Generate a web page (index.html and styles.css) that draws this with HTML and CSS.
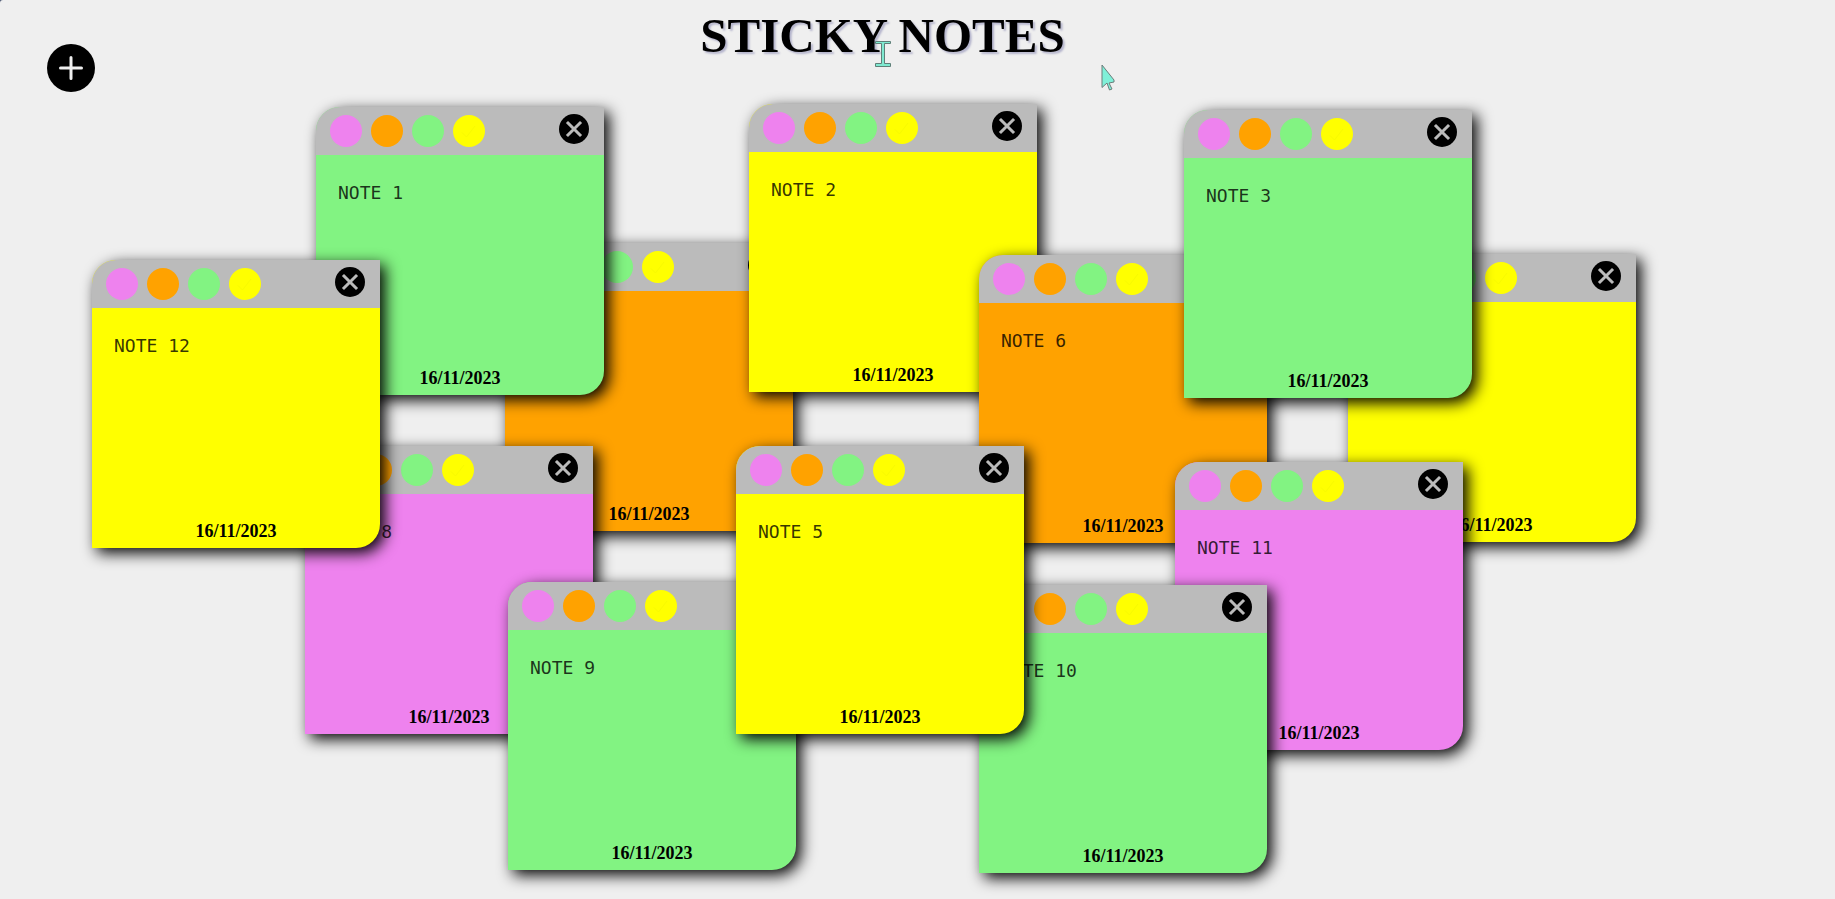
FILE: index.html
```html
<!DOCTYPE html>
<html lang="en">
<head>
<meta charset="utf-8">
<meta name="viewport" content="width=device-width, initial-scale=1">
<title>Sticky Notes</title>
<link rel="stylesheet" href="styles.css">
</head>
<body>
<svg class="sprite" aria-hidden="true">
  <symbol id="icon-plus" viewBox="0 0 48 48"><path d="M24 13.500v21M13.500 24h21" stroke="#efefef" stroke-width="3" stroke-linecap="round"/></symbol>
  <symbol id="icon-close" viewBox="0 0 30 30"><path d="M9 9l12 12M21 9l-12 12" stroke="#bbb" stroke-width="3" stroke-linecap="square"/></symbol>
  <symbol id="icon-check" viewBox="0 0 32 32"><path d="M9 17.500l4.500 4.500L22 11" fill="none" stroke="#f8fa00" stroke-width="1"/></symbol>
</svg>
<main class="board">
  <header class="header">
    <button class="add" type="button" aria-label="Add note"><svg><use href="#icon-plus"/></svg></button>
    <h1 class="title">STICKY NOTES</h1>
  </header>
  <section class="canvas" id="canvas" aria-label="Notes"></section>
  <svg class="cursor cursor-text" viewBox="0 0 18 28" aria-hidden="true"><path d="M1.500 1.500h15v2h-6v20h6v3h-15v-3h6v-20h-6z" fill="#7fe9d0" stroke="#5f7f78"/></svg>
  <svg class="cursor cursor-arrow" viewBox="0 0 14 28" aria-hidden="true"><path d="M1 1v22.500l5-4.500 2.500 7 2.500-1-3-6 5-1V16z" fill="#7ff0d8" stroke="#6c7c7a"/></svg>
</main>
<script src="notes.js"></script>
</body>
</html>
```
FILE: notes.js
```js
// Notes in stacking order, the last one on top.
const notes = [
  { id: 4, color: 'orange', x: 505, y: 243 },
  { id: 7, color: 'yellow', x: 1348, y: 254 },
  { id: 1, color: 'green', x: 316, y: 107 },
  { id: 2, color: 'yellow', x: 749, y: 104 },
  { id: 6, color: 'orange', x: 979, y: 255 },
  { id: 3, color: 'green', x: 1184, y: 110 },
  { id: 8, color: 'violet', x: 305, y: 446 },
  { id: 9, color: 'green', x: 508, y: 582 },
  { id: 11, color: 'violet', x: 1175, y: 462 },
  { id: 10, color: 'green', x: 979, y: 585 },
  { id: 5, color: 'yellow', x: 736, y: 446 },
  { id: 12, color: 'yellow', x: 92, y: 260 }
];
const swatches = ['violet', 'orange', 'green', 'yellow'];

document.getElementById('canvas').innerHTML = notes.map(n => `
  <article class="note ${n.color}" style="left:${n.x}px;top:${n.y}px">
    <div class="bar">
      <div class="swatches">${swatches.map(c => `<button type="button" class="swatch ${c}" aria-label="${c}">${c === 'yellow' ? '<svg><use href="#icon-check"/></svg>' : ''}</button>`).join('')}</div>
      <button type="button" class="close" aria-label="Delete note ${n.id}"><svg><use href="#icon-close"/></svg></button>
    </div>
    <textarea class="text" aria-label="Note ${n.id} text" spellcheck="false">NOTE ${n.id}</textarea>
    <time class="date" datetime="2023-11-16">16/11/2023</time>
  </article>`).join('');
```
FILE: styles.css
```css
* {
  box-sizing: border-box;
}

html {
  background: #4a5570;
}

body {
  margin: 0;
  font-family: "Palatino Linotype", Palatino, "Liberation Serif", serif;
}

button {
  border: 0;
  padding: 0;
  border-radius: 50%;
  cursor: pointer;
}

button svg {
  display: block;
  width: 100%;
  height: 100%;
}

.sprite {
  position: absolute;
  width: 0;
  height: 0;
}

.board {
  position: relative;
  min-height: 100vh;
  overflow: hidden;
  background: #efefef;
  border-top-left-radius: 3px;
}

.header {
  display: grid;
  grid-template-columns: 48px 1fr 48px;
  padding: 8px 117px 0 47px;
}

.add {
  width: 48px;
  height: 48px;
  margin-top: 36px;
  background: #000;
}

.title {
  margin: 0;
  font-size: 49px;
  line-height: 56px;
  font-weight: bold;
  text-align: center;
  text-shadow: 2px 2px 2px #b4b4cc;
}

.note {
  position: absolute;
  display: flex;
  flex-direction: column;
  width: 288px;
  height: 288px;
  border-radius: 24px 0 24px 0;
  overflow: hidden;
  box-shadow: 5px 5px 15px #000;
}

.violet {
  background: #ee82ee;
}

.orange {
  background: #ffa200;
}

.green {
  background: #82f382;
}

.yellow {
  background: #ffff00;
}

.bar {
  display: flex;
  justify-content: space-between;
  height: 48px;
  padding: 7px 15px 0 14px;
  background: #bbb;
}

.swatches {
  display: flex;
  gap: 9px;
  padding-top: 1px;
}

.swatch {
  width: 32px;
  height: 32px;
}

.close {
  width: 30px;
  height: 30px;
  background: #000;
}

.text {
  flex: 1;
  min-height: 0;
  width: 100%;
  padding: 26px 22px 0;
  border: 0;
  outline: 0;
  resize: none;
  overflow: hidden;
  background: transparent;
  color: rgba(0, 0, 0, 0.8);
  font-family: Consolas, "DejaVu Sans Mono", monospace;
  font-size: 18px;
  line-height: 24px;
}

.date {
  padding-bottom: 5px;
  font-size: 18px;
  line-height: 24px;
  font-weight: bold;
  text-align: center;
}

.cursor {
  position: absolute;
  pointer-events: none;
}

.cursor-text {
  left: 874px;
  top: 40px;
  width: 18px;
  height: 28px;
}

.cursor-arrow {
  left: 1101px;
  top: 64px;
  width: 14px;
  height: 28px;
}
```
